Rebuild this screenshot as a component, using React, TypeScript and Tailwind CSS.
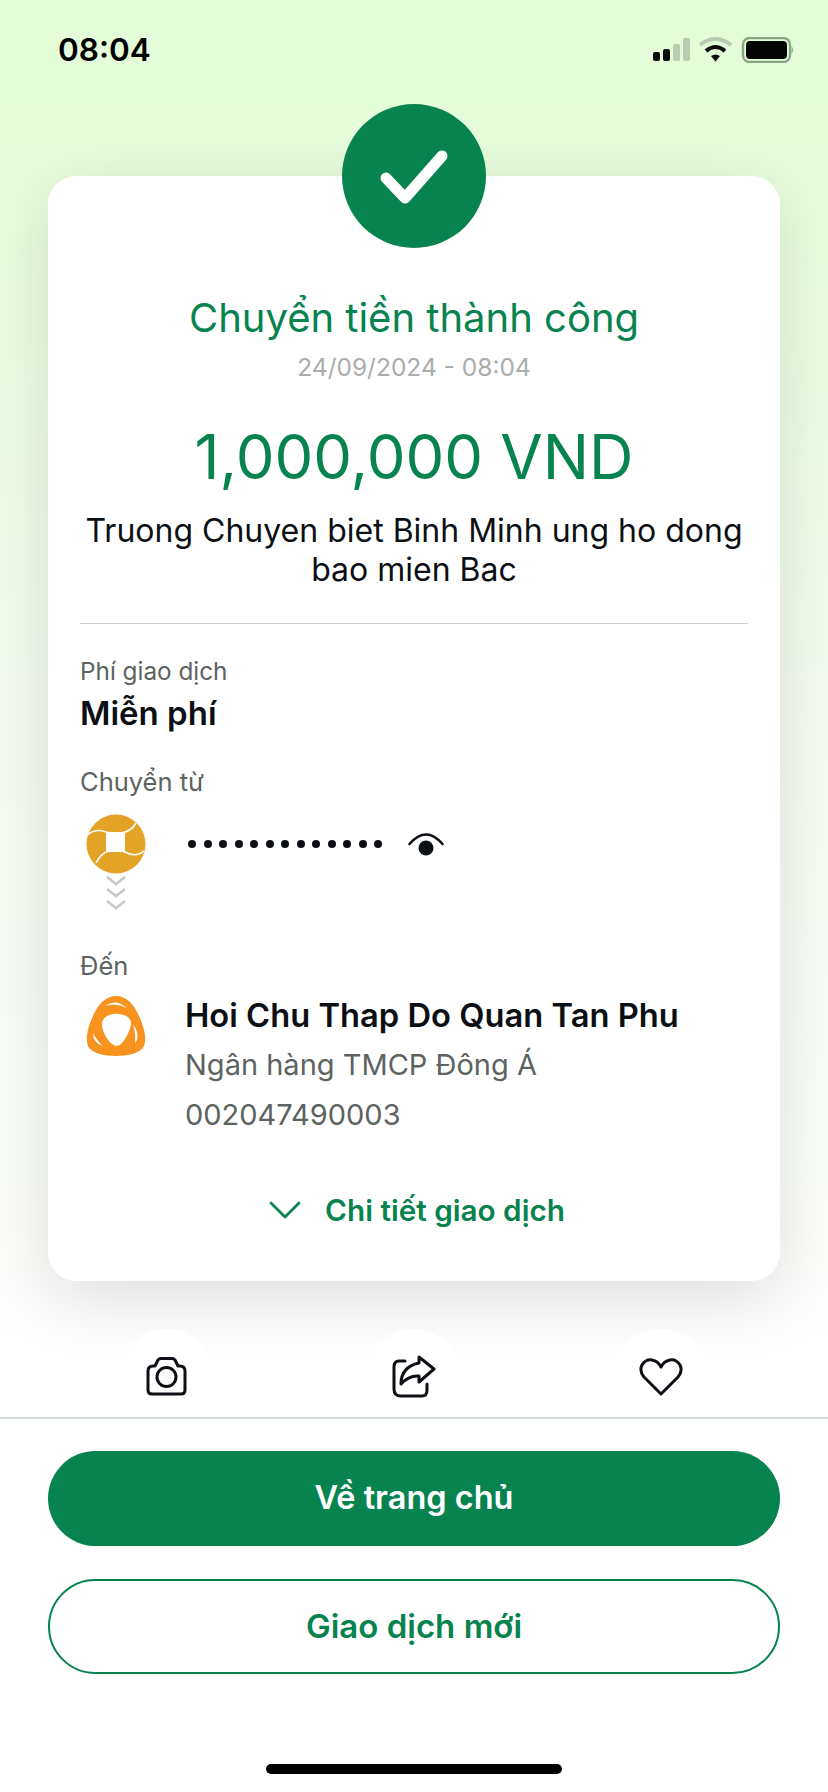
function StatusBar() {
  return (
    <div className="flex h-[104px] shrink-0 items-start justify-between pl-[58px] pr-[34px] pt-[31px]">
      <span className="text-[31.5px] leading-[38px] font-semibold text-black">08:04</span>
      <svg width="141" height="26" viewBox="0 0 141 26" className="mt-[6px]">
        <rect x="0" y="15" width="7" height="9" rx="2" fill="#0b0b0b" />
        <rect x="10" y="12" width="7" height="12" rx="2" fill="#0b0b0b" />
        <rect x="20" y="7" width="7" height="17" rx="2" fill="#b9ccb3" />
        <rect x="30" y="1" width="7" height="23" rx="2" fill="#b9ccb3" />
        <path d="M47 8 Q62.5 -4 78 8" fill="none" stroke="#b9ccb3" strokeWidth="4" />
        <path d="M53 14 Q62.5 6 72 14" fill="none" stroke="#0b0b0b" strokeWidth="4" />
        <path d="M58 19 L62.5 24.5 L67 19 Q62.5 16 58 19 Z" fill="#0b0b0b" />
        <rect x="90" y="1" width="47" height="24" rx="6.5" fill="none" stroke="#8da587" strokeWidth="2.4" />
        <rect x="93" y="4" width="41" height="18" rx="4" fill="#050505" />
        <path d="M138.500 9 Q141.500 13 138.500 17 Z" fill="#8da587" />
      </svg>
    </div>
  );
}

function SourceBankLogo() {
  return (
    <svg width="60" height="60" viewBox="0 0 60 60">
      <circle cx="30" cy="30" r="29.5" fill="#e3a327" />
      <path d="M20 18 H39 V38 H20 Z" fill="#fff" />
      <path d="M1 21 Q10 14 20 18 Q30 21 39 18 Q46 16 50 9" fill="none" stroke="#fff" strokeWidth="1.6" />
      <path d="M58 37 Q50 44 39 38 Q30 35 20 38 Q14 41 10 49" fill="none" stroke="#fff" strokeWidth="1.6" />
    </svg>
  );
}

function TargetBankLogo() {
  return (
    <svg width="60" height="60" viewBox="0 0 60 60">
      <path
        d="M30 0 C40 0 48 8 53 20 C58 31 61 42 58 50 C55 57 42 60 30 60 C18 60 5 57 2 50 C-1 42 2 31 7 20 C12 8 20 0 30 0 Z"
        fill="#f7931e"
      />
      <path d="M16 28 C16 20 26 17 33 18 C42 19 46 24 45 29 C43 38 36 50 31 50 C25 50 16 38 16 28 Z" fill="#fff" />
      <path d="M19 10 Q30 2 41 12 Q30 6 19 10 Z" fill="#fff" />
      <path d="M47 28 Q55 40 49 47 Q50 38 47 28 Z" fill="#fff" />
      <path d="M7 37 Q7 47 17 50 Q11 45 7 37 Z" fill="#fff" />
    </svg>
  );
}

function EyeIcon() {
  return (
    <svg width="36" height="26" viewBox="0 0 36 26">
      <path d="M1.500 13 Q18 -6 34.500 13" fill="none" stroke="#0c0f14" strokeWidth="2.6" strokeLinecap="round" />
      <circle cx="18" cy="17" r="7.500" fill="#0c0f14" />
    </svg>
  );
}

function CameraIcon() {
  return (
    <svg width="42" height="40" viewBox="0 0 42 40" fill="none" stroke="#0c0f14" strokeWidth="3" strokeLinejoin="round">
      <path d="M2 14 Q2 9 7 9 H9 L12 3 Q13 1.500 15 1.500 H26 Q28 1.500 29 3 L32 9 H34 Q39 9 39 14 V33 Q39 37 35 37 H6 Q2 37 2 33 Z" />
      <circle cx="20.500" cy="20" r="9.500" />
    </svg>
  );
}

function ShareIcon() {
  return (
    <svg width="44" height="44" viewBox="0 0 44 44" fill="none" stroke="#0c0f14" strokeWidth="3" strokeLinejoin="round" strokeLinecap="round">
      <path d="M13 6 H7 Q2 6 2 12 V34 Q2 41 9 41 H30 Q35 41 35 35 V29" />
      <path d="M27 2 L42 14 L27 27 V21 Q17 20 9 29 Q9 12 27 8 Z" />
    </svg>
  );
}

function HeartIcon() {
  return (
    <svg width="44" height="40" viewBox="0 0 44 40" fill="none" stroke="#0c0f14" strokeWidth="3" strokeLinejoin="round">
      <path d="M22 37 L5 20 Q0 14 3 8 Q7 2 13 3 Q19 4 22 10 Q25 4 31 3 Q37 2 41 8 Q44 14 39 20 Z" />
    </svg>
  );
}

function RoundAction({ children }: { children: React.ReactNode }) {
  return (
    <div className="flex h-[96px] w-[96px] shrink-0 items-center justify-center rounded-full bg-white">
      {children}
    </div>
  );
}

export default function App() {
  return (
    <div className="flex h-[1792px] w-[828px] flex-col overflow-hidden bg-white [font-family:Inter,sans-serif]">
      {/* Top area with gradient */}
      <div className="flex h-[1419px] shrink-0 flex-col overflow-hidden border-b-2 border-[#d5dedb] bg-gradient-to-b from-[#e4fcd8] from-5% via-[#f6fcf2] via-50% to-white">
        <StatusBar />

        <div className="mx-[48px] mt-[72px] flex h-[1105px] shrink-0 flex-col rounded-[28px] bg-white px-[32px] shadow-[0_16px_70px_rgba(0,0,0,0.13)]">
          <div className="-mt-[72px] flex justify-center">
            <div className="flex h-[144px] w-[144px] items-center justify-center rounded-full bg-[#07834f]">
              <svg width="76" height="60" viewBox="0 0 76 60">
                <path d="M10 32 L29 52 L66 10" fill="none" stroke="#fff" strokeWidth="11" strokeLinecap="round" strokeLinejoin="round" />
              </svg>
            </div>
          </div>

          <div className="mt-[45px] text-center text-[40px] leading-[50px] text-[#07834f]">Chuyển tiền thành công</div>
          <div className="mt-[9px] text-center text-[24.5px] leading-[30px] text-[#a9adab]">24/09/2024 - 08:04</div>
          <div className="mt-[39px] text-center text-[61.5px] leading-[72px] text-[#07834f]">1,000,000 VND</div>
          <div className="mt-[18px] text-center text-[32px] leading-[39px] text-[#0c0f14]">
            Truong Chuyen biet Binh Minh ung ho dong bao mien Bac
          </div>

          <div className="mt-[34px] border-t border-[#c9d6d2]" />

          <div className="mt-[32px] text-[24.3px] leading-[30px] text-[#5d6361]">Phí giao dịch</div>
          <div className="mt-[7px] text-[33px] leading-[40px] font-semibold text-[#0c0f14]">Miễn phí</div>
          <div className="mt-[33px] text-[25.5px] leading-[32px] text-[#5d6361]">Chuyển từ</div>

          <div className="mt-[16px] flex items-start">
            <div className="ml-[6px] flex w-[60px] flex-col items-center">
              <SourceBankLogo />
              <svg width="22" height="38" viewBox="0 0 22 38" fill="none" stroke="#c4c8c6" strokeWidth="2.6">
                <path d="M2 3 L11 10 L20 3" />
                <path d="M2 15 L11 22 L20 15" />
                <path d="M2 27 L11 34 L20 27" />
              </svg>
            </div>
            <div className="ml-[42px] mt-[17px] flex items-center gap-[26px]">
              <span className="flex gap-[7.5px]">
                {Array.from({ length: 13 }).map((_, i) => (
                  <span key={i} className="h-[8px] w-[8px] rounded-full bg-[#0c0f14]" />
                ))}
              </span>
              <EyeIcon />
            </div>
          </div>

          <div className="mt-[38px] text-[25.5px] leading-[32px] text-[#5d6361]">Đến</div>
          <div className="mt-[11px] flex items-start">
            <div className="ml-[6px] mt-[3px] w-[60px]">
              <TargetBankLogo />
            </div>
            <div className="ml-[39px] flex flex-col">
              <span className="text-[32.7px] leading-[44px] font-semibold text-[#0c0f14]">Hoi Chu Thap Do Quan Tan Phu</span>
              <span className="mt-[6px] text-[29px] leading-[44px] text-[#5d6361]">Ngân hàng TMCP Đông Á</span>
              <span className="mt-[6px] text-[29px] leading-[44px] text-[#5d6361]">002047490003</span>
            </div>
          </div>

          <div className="ml-[6px] mt-[53px] flex items-center justify-center gap-[24px] text-[#07834f]">
            <svg width="32" height="20" viewBox="0 0 32 20" fill="none" stroke="#07834f" strokeWidth="2.8" strokeLinecap="round" strokeLinejoin="round">
              <path d="M2 3 L16 17 L30 3" />
            </svg>
            <span className="text-[29.7px] leading-[40px] font-semibold">Chi tiết giao dịch</span>
          </div>
        </div>

        <div className="mt-[48px] flex shrink-0 justify-between px-[119px]">
          <RoundAction>
            <CameraIcon />
          </RoundAction>
          <RoundAction>
            <ShareIcon />
          </RoundAction>
          <RoundAction>
            <HeartIcon />
          </RoundAction>
        </div>
      </div>

      {/* Bottom buttons */}
      <div className="flex flex-1 flex-col px-[48px] pt-[32px]">
        <div className="flex h-[95px] shrink-0 items-center justify-center rounded-full bg-[#07834f] text-[32.5px] font-semibold text-white">
          Về trang chủ
        </div>
        <div className="mt-[33px] flex h-[95px] shrink-0 items-center justify-center rounded-full border-2 border-[#07834f] text-[33px] font-semibold text-[#07834f]">
          Giao dịch mới
        </div>
        <div className="mx-auto mt-[90px] h-[10px] w-[296px] shrink-0 rounded-full bg-black" />
      </div>
    </div>
  );
}
